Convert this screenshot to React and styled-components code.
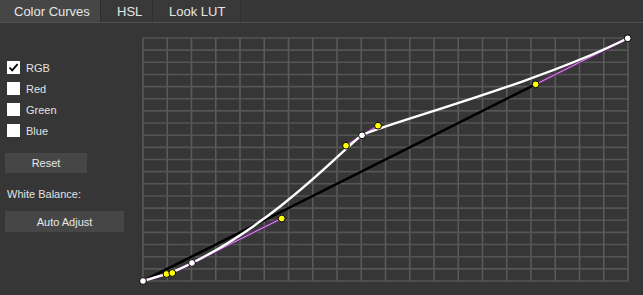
import React from "react";
import styled, { createGlobalStyle } from "styled-components";

const Global = createGlobalStyle`
  html, body { margin: 0; padding: 0; background: #363636; }
  body { font-family: "Liberation Sans", Arial, sans-serif; }
`;

const Page = styled.div`
  width: 643px;
  height: 295px;
  background: #363636;
  display: flex;
  flex-direction: column;
  overflow: hidden;
`;

const TabBar = styled.div`
  display: flex;
  height: 22px;
  border-bottom: 1px solid #505050;
  background: #373737;
`;

const Tab = styled.div`
  width: ${(p) => p.$w}px;
  padding-left: ${(p) => p.$pl}px;
  box-sizing: border-box;
  display: flex;
  align-items: center;
  font-size: 13px;
  color: #e6e6e6;
  background: ${(p) => (p.$active ? "#464646" : "#393939")};
  border-right: 1px solid #2f2f2f;
`;

const Body = styled.div`
  flex: 1;
  display: flex;
`;

const Side = styled.div`
  width: 138px;
  display: flex;
  flex-direction: column;
  padding: 34px 0 0 5px;
  box-sizing: border-box;
`;

const CheckRow = styled.div`
  display: flex;
  align-items: center;
  gap: 6px;
  height: 21px;
  padding-left: 2px;
  font-size: 11px;
  color: #e2e2e2;
`;

const Box = styled.div`
  width: 13px;
  height: 13px;
  background: #ffffff;
  display: flex;
  align-items: center;
  justify-content: center;
`;

const Button = styled.div`
  width: ${(p) => p.$w}px;
  height: ${(p) => p.$h}px;
  background: #464646;
  color: #e6e6e6;
  font-size: 11px;
  display: flex;
  align-items: center;
  justify-content: center;
  margin-top: ${(p) => p.$mt}px;
`;

const Label = styled.div`
  font-size: 11px;
  color: #e2e2e2;
  margin-top: 14px;
  padding-left: 2px;
  height: 14px;
  line-height: 14px;
`;

const ChartWrap = styled.div`
  flex: 1;
  display: flex;
`;

const Check = () => (
  <svg width="11" height="11" viewBox="0 0 11 11">
    <path d="M1.5 5.5 L4.2 8.3 L9.6 2.2" fill="none" stroke="#000" strokeWidth="1.8" />
  </svg>
);

const L = 143, T = 38, W = 485, H = 243;

function Chart() {
  const lines = [];
  for (let i = 0; i <= 20; i++) {
    const x = L + (W * i) / 20;
    const y = T + (H * i) / 20;
    lines.push(<line key={"v" + i} x1={x} y1={T} x2={x} y2={T + H} stroke="#5a5a5a" strokeWidth="1.6" />);
    lines.push(<line key={"h" + i} x1={L} y1={y} x2={L + W} y2={y} stroke="#555555" strokeWidth="1.6" />);
  }
  const handles = [
    [143, 281, 166.5, 274],
    [192, 263, 172.3, 273],
    [192, 263, 281.7, 218.5],
    [362, 135.3, 346, 145.7],
    [362, 135.3, 378, 125.7],
    [627.7, 38.3, 535.7, 84.3],
  ];
  const yellow = [
    [166.5, 274], [172.3, 273], [281.7, 218.5], [346, 145.7], [378, 125.7], [535.7, 84.3],
  ];
  const white = [[143, 281], [192, 263], [362, 135.3], [627.7, 38.3]];
  return (
    <svg width="505" height="272" viewBox="138 23 505 272">
      {lines}
      <line x1={L} y1={T + H} x2={L + W} y2={T} stroke="#000" strokeWidth="2.6" />
      {handles.map((h, i) => (
        <g key={"h" + i}>
          <line x1={h[0]} y1={h[1]} x2={h[2]} y2={h[3]} stroke="#6a2a78" strokeWidth="3.2" />
          <line x1={h[0]} y1={h[1]} x2={h[2]} y2={h[3]} stroke="#d2aeda" strokeWidth="0.9" />
        </g>
      ))}
      <path
        d="M143 281 C166.5 274 172.3 273 192 263 C281.7 218.5 346 145.7 362 135.3 C378 125.7 535.7 84.3 627.7 38.3"
        fill="none"
        stroke="#ffffff"
        strokeWidth="2.4"
      />
      {yellow.map((p, i) => (
        <circle key={"y" + i} cx={p[0]} cy={p[1]} r="3.4" fill="#ffff00" stroke="#000" strokeWidth="1" />
      ))}
      {white.map((p, i) => (
        <circle key={"w" + i} cx={p[0]} cy={p[1]} r="3.4" fill="#ffffff" stroke="#000" strokeWidth="1" />
      ))}
    </svg>
  );
}

export default function App() {
  return (
    <Page>
      <Global />
      <TabBar>
        <Tab $w={101} $pl={14} $active>Color Curves</Tab>
        <Tab $w={52} $pl={16}>HSL</Tab>
        <Tab $w={88} $pl={16}>Look LUT</Tab>
      </TabBar>
      <Body>
        <Side>
          <CheckRow><Box><Check /></Box>RGB</CheckRow>
          <CheckRow><Box />Red</CheckRow>
          <CheckRow><Box />Green</CheckRow>
          <CheckRow><Box />Blue</CheckRow>
          <Button $w={82} $h={20} $mt={12}>Reset</Button>
          <Label>White Balance:</Label>
          <Button $w={119} $h={21} $mt={10}>Auto Adjust</Button>
        </Side>
        <ChartWrap>
          <Chart />
        </ChartWrap>
      </Body>
    </Page>
  );
}
